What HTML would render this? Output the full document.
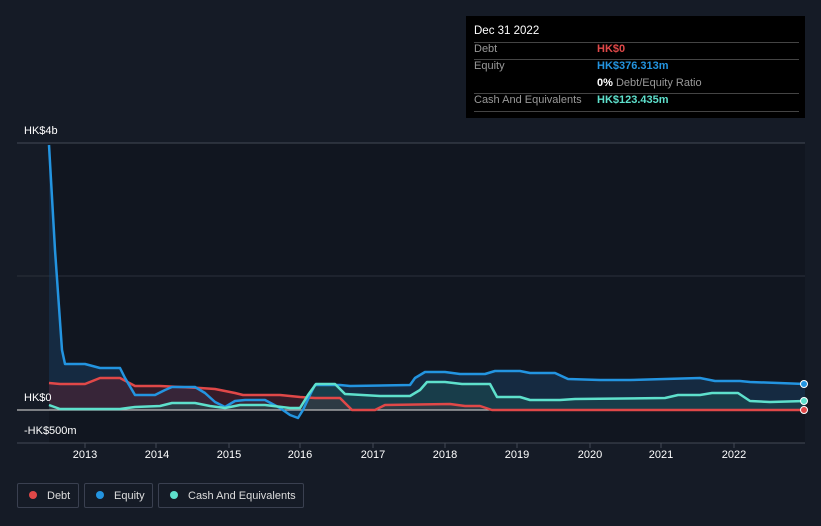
<!DOCTYPE html>
<html><head><meta charset="utf-8"><style>
body{margin:0;width:821px;height:526px;background:#151b26;font-family:"Liberation Sans",sans-serif;overflow:hidden;position:relative;color:#fff}
.t{position:absolute;background:#000;left:466px;top:16px;width:339px;height:102px;font-size:11px}
.t .r{position:absolute;left:8px;right:6px;border-top:1px solid #444}
.lab{position:absolute;font-size:11px;color:#fff}
.yr{position:absolute;top:449px;font-size:11px;color:#fff;transform:translateX(-50%)}
.lg{position:absolute;top:483px;height:25px;border:1px solid #3a4050;border-radius:2px;font-size:11px;color:#ddd;line-height:25px;box-sizing:border-box}
.lg i{display:inline-block;width:8px;height:8px;border-radius:50%;margin:0 10px 0 11px;vertical-align:-0px}
</style></head><body>
<svg width="821" height="526" style="position:absolute;left:0;top:0">
<rect x="49" y="143" width="756" height="300" fill="#111620"/>
<line x1="17" y1="143" x2="805" y2="143" stroke="#444a55"/>
<line x1="17" y1="276" x2="805" y2="276" stroke="#2a303b"/>
<line x1="17" y1="443" x2="805" y2="443" stroke="#444a55"/>
<g stroke="#444a55"><line x1="85" y1="443" x2="85" y2="448"/><line x1="156" y1="443" x2="156" y2="448"/><line x1="229" y1="443" x2="229" y2="448"/><line x1="300" y1="443" x2="300" y2="448"/><line x1="373" y1="443" x2="373" y2="448"/><line x1="445" y1="443" x2="445" y2="448"/><line x1="517" y1="443" x2="517" y2="448"/><line x1="590" y1="443" x2="590" y2="448"/><line x1="661" y1="443" x2="661" y2="448"/><line x1="734" y1="443" x2="734" y2="448"/></g>
<polygon fill="#1a3d5c" opacity="0.55" points="49,410 49,145 55,250 62,350 65,364 85,364 100,368 120,368 125,378 135,395 155,395 165,390 172,387 195,387 205,393 215,402 225,407 235,401 245,400 265,400 280,408 290,415 298,418 303,410 310,395 315,385 340,385 350,386 410,385 415,378 425,372 445,372 460,374 485,374 495,371 520,371 530,373 555,373 568,379 600,380 630,380 665,379 700,378 715,381 740,381 750,382 805,384 805,410"/>
<polygon fill="#5a2030" opacity="0.5" points="49,410 49,383 60,384 85,384 100,378 120,378 135,386 160,386 200,388 215,389 235,393 243,395 280,395 300,397 315,398 340,398 352,410 375,410 385,405 450,404 465,406 480,406 492,410"/>
<polygon fill="#1f5a58" opacity="0.4" points="49,410 49,405 60,409 120,409 135,407 160,406 172,403 195,403 210,406 225,408 240,405 265,405 290,408 300,408 308,395 316,384 335,384 345,394 380,396 410,396 420,390 427,382 445,382 462,384 490,384 497,397 520,397 530,400 560,400 575,399 665,398 678,395 700,395 712,393 738,393 750,401 770,402 805,401 805,410"/>
<line x1="17" y1="410" x2="805" y2="410" stroke="#bbb" stroke-width="1.2"/>
<polyline fill="none" stroke="#e04848" stroke-width="2.5" stroke-linejoin="round" points="49,383 60,384 85,384 100,378 120,378 135,386 160,386 200,388 215,389 235,393 243,395 280,395 300,397 315,398 340,398 352,410 375,410 385,405 450,404 465,406 480,406 492,410 805,410"/>
<polyline fill="none" stroke="#2394e0" stroke-width="2.5" stroke-linejoin="round" points="49,145 55,250 62,350 65,364 85,364 100,368 120,368 125,378 135,395 155,395 165,390 172,387 195,387 205,393 215,402 225,407 235,401 245,400 265,400 280,408 290,415 298,418 303,410 310,395 315,385 340,385 350,386 410,385 415,378 425,372 445,372 460,374 485,374 495,371 520,371 530,373 555,373 568,379 600,380 630,380 665,379 700,378 715,381 740,381 750,382 805,384"/>
<polyline fill="none" stroke="#5ee0cc" stroke-width="2.5" stroke-linejoin="round" points="49,405 60,409 120,409 135,407 160,406 172,403 195,403 210,406 225,408 240,405 265,405 290,408 300,408 308,395 316,384 335,384 345,394 380,396 410,396 420,390 427,382 445,382 462,384 490,384 497,397 520,397 530,400 560,400 575,399 665,398 678,395 700,395 712,393 738,393 750,401 770,402 805,401"/>
<circle cx="804" cy="384" r="3.5" fill="#2394e0" stroke="#fff" stroke-width="1"/>
<circle cx="804" cy="401" r="3.5" fill="#5ee0cc" stroke="#fff" stroke-width="1"/>
<circle cx="804" cy="410" r="3.5" fill="#e04848" stroke="#fff" stroke-width="1"/>
</svg>
<div class="lab" style="left:24px;top:125px">HK$4b</div>
<div class="lab" style="left:24px;top:392px">HK$0</div>
<div class="lab" style="left:24px;top:425px">-HK$500m</div>
<div class="yr" style="left:85px">2013</div><div class="yr" style="left:157px">2014</div><div class="yr" style="left:229px">2015</div><div class="yr" style="left:300px">2016</div><div class="yr" style="left:373px">2017</div><div class="yr" style="left:445px">2018</div><div class="yr" style="left:517px">2019</div><div class="yr" style="left:590px">2020</div><div class="yr" style="left:661px">2021</div><div class="yr" style="left:734px">2022</div>
<div class="t">
<div style="position:absolute;left:8px;top:9px;font-size:11.5px">Dec 31 2022</div>
<div class="r" style="top:26px"></div>
<div style="position:absolute;left:8px;top:27px;color:#999">Debt</div><div style="position:absolute;left:131px;top:27px;color:#e04848;font-weight:bold">HK$0</div>
<div class="r" style="top:43px"></div>
<div style="position:absolute;left:8px;top:44px;color:#999">Equity</div><div style="position:absolute;left:131px;top:44px;color:#2394e0;font-weight:bold">HK$376.313m</div>
<div style="position:absolute;left:131px;top:61px;color:#999"><b style="color:#fff">0%</b> Debt/Equity Ratio</div>
<div class="r" style="top:77px"></div>
<div style="position:absolute;left:8px;top:78px;color:#999">Cash And Equivalents</div><div style="position:absolute;left:131px;top:78px;color:#5ee0cc;font-weight:bold">HK$123.435m</div>
<div class="r" style="top:95px"></div>
</div>
<div class="lg" style="left:17px;width:62px"><i style="background:#e04848"></i>Debt</div>
<div class="lg" style="left:84px;width:69px"><i style="background:#2394e0"></i>Equity</div>
<div class="lg" style="left:158px;width:146px"><i style="background:#5ee0cc"></i>Cash And Equivalents</div>
</body></html>
